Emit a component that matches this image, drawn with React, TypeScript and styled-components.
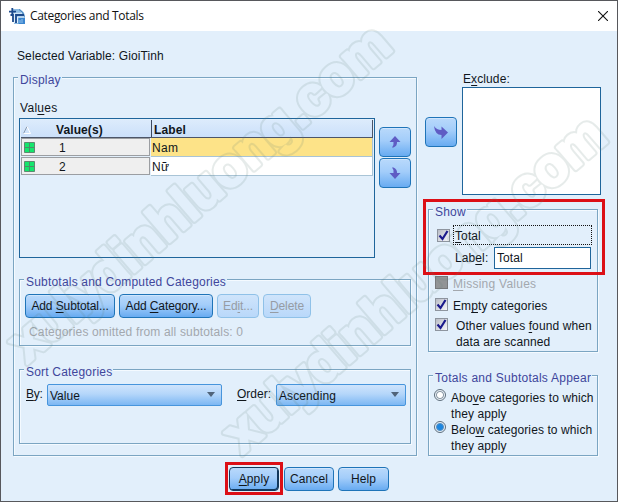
import React from "react";
import styled, { createGlobalStyle, css } from "styled-components";

const GlobalStyle = createGlobalStyle`
  * {
    box-sizing: border-box;
  }

  body {
    margin: 0;
    overflow: hidden;
    font-family: "Liberation Sans", Arial, sans-serif;
    font-size: 12px;
    line-height: 14px;
    color: #10161c;
  }
`;

const Window = styled.div`
  position: relative;
  display: flex;
  flex-direction: column;
  width: 618px;
  height: 502px;
  border: 1px solid #57585c;
  background-color: #e2effb;
`;

const TitleBar = styled.header`
  display: flex;
  align-items: center;
  height: 30px;
  padding: 0 9px 0 8px;
  background-color: #fff;
`;

const Title = styled.h1`
  flex: 1;
  margin: 0 0 0 5px;
  font-family: "Open Sans", "Noto Sans", sans-serif;
  font-size: 12px;
  font-weight: 400;
  letter-spacing: -0.33px;
  color: #111;
`;

const Text = styled.span<{ $spacing?: number; $muted?: boolean }>`
  white-space: nowrap;
  letter-spacing: ${({ $spacing = 0.1 }) => $spacing}px;
  ${({ $muted }) => $muted && "color: #a3a8ae;"}
`;

const Key = styled.span`
  text-decoration: underline;
  text-underline-offset: 2px;
  text-decoration-thickness: 1px;
  text-decoration-skip-ink: none;
`;

const Selected = styled.div`
  display: flex;
  height: 46px;
  padding: 18px 0 0 16px;
`;

const Columns = styled.main`
  display: flex;
  height: 379px;
  padding-left: 12px;
`;

const Group = styled.section<{ $height: number }>`
  display: flex;
  flex-direction: column;
  flex-shrink: 0;
  height: ${({ $height }) => $height}px;
  border: 1px solid #7ba5c2;
  box-shadow: 1px 1px 0 #f4faff, inset 1px 1px 0 #f4faff;
`;

const Legend = styled.h2<{ $spacing?: number }>`
  align-self: flex-start;
  height: 14px;
  margin: -5px 0 0 4px;
  padding: 0 1px 0 2px;
  background-color: #e2effb;
  color: #40469c;
  font-size: 12px;
  font-weight: 400;
  white-space: nowrap;
  letter-spacing: ${({ $spacing = 0.2 }) => $spacing}px;
`;

const DisplayGroup = styled(Group)`
  width: 404px;

  > ${Text} {
    margin: 14px 0 3px 6px;
  }
`;

const ValuesRow = styled.div`
  display: flex;
  gap: 4px;
  padding-left: 5px;
`;

const Table = styled.div`
  width: 356px;
  height: 140px;
  padding: 1px;
  border: 1px solid #1f659b;
`;

const HeaderRow = styled.div`
  display: grid;
  grid-template-columns: 130px 1fr;
  width: 352px;
  height: 18px;
  border-right: 1px solid #4c5568;
  border-bottom: 1px solid #4c5568;
  background: linear-gradient(#dcebfc, #cbe0fa);
  font-weight: 700;
`;

const HeaderCell = styled.div<{ $indent: number }>`
  display: flex;
  align-items: center;
  gap: 25px;
  padding: 2px 0 0 ${({ $indent }) => $indent}px;
  letter-spacing: 0.1px;

  & + & {
    border-left: 1px solid #3c4960;
  }
`;

const Row = styled.div`
  display: grid;
  grid-template-columns: 130px 1fr;
  width: 352px;
  height: 19px;
`;

const ValueCell = styled.div`
  display: flex;
  align-items: center;
  gap: 24px;
  height: 18px;
  margin: 0 1px 1px 0;
  padding: 1px 0 0 2px;
  border: 1px solid #9b9ea2;
  background-color: #efefef;
`;

const LabelCell = styled.div<{ $active?: boolean }>`
  padding: 3px 0 0 1px;
  border: 1px solid #a9c4d6;
  border-width: 0 1px 1px 0;
  background-color: ${({ $active }) => ($active ? "#fde388" : "#fff")};
  letter-spacing: 0.3px;
`;

const Stack = styled.div`
  display: flex;
  flex-direction: column;
  gap: 1px;
  padding-top: 9px;
`;

const buttonFace = css`
  border: 1px solid #1f74b8;
  border-radius: 4px;
  background: linear-gradient(#b9d9fb, #a3cdfa 45%, #68abf1);
  box-shadow: inset 0 1px 0 #cfe5fd;
`;

const IconButton = styled.button`
  display: flex;
  align-items: center;
  justify-content: center;
  flex-shrink: 0;
  width: 32px;
  height: 30px;
  padding: 0;
  ${buttonFace}
`;

const Button = styled.button<{ $width: number; $default?: boolean }>`
  width: ${({ $width }) => $width}px;
  height: 24px;
  padding: 0;
  font: inherit;
  color: #10161c;
  letter-spacing: -0.1px;
  white-space: nowrap;
  ${buttonFace}
  ${({ $default }) =>
    $default && "border-color: #12385c; box-shadow: inset -1px -1px 0 #12385c;"}

  &:disabled {
    color: #969ca4;
    border-color: #8fc1e8;
    background: linear-gradient(#cfe4fb, #b9d8fa);
    box-shadow: none;
  }
`;

const SubtotalsGroup = styled(Group)`
  width: 392px;
  margin: 21px 0 0 5px;

  > ${Text} {
    margin: 7px 0 0 9px;
  }
`;

const SubtotalButtons = styled.div`
  display: flex;
  gap: 4px;
  padding: 5px 0 0 5px;
`;

const SortGroup = styled(Group)`
  width: 392px;
  margin: 23px 0 0 5px;
`;

const SortRow = styled.div`
  display: flex;
  align-items: flex-start;
  padding: 5px 0 0 6px;

  > ${Text} {
    padding-top: 3px;
  }
`;

const SortLabel = styled(Text)<{ $width: number }>`
  flex-shrink: 0;
  width: ${({ $width }) => $width}px;
`;

const Select = styled.div<{ $width: number }>`
  display: flex;
  align-items: center;
  justify-content: space-between;
  flex-shrink: 0;
  width: ${({ $width }) => $width}px;
  height: 22px;
  padding: 1px 6px 0 2px;
  border: 1px solid #4795dc;
  border-radius: 2px;
  background: linear-gradient(#cfe4fc, #b4d6fa 45%, #7cb7f3);

  & + ${Text} {
    margin-left: 15px;
  }
`;

const Caret = styled.span`
  border: 4px solid transparent;
  border-top: 5px solid #50647a;
  border-bottom: 0;
  margin-top: -3px;
`;

const Side = styled.div`
  display: flex;
  flex-direction: column;
  padding-left: 8px;
`;

const ExcludeRow = styled.div`
  display: flex;
  gap: 5px;
  height: 132px;

  > ${IconButton} {
    margin-top: 40px;
  }
`;

const ExcludeColumn = styled.div`
  display: flex;
  flex-direction: column;
  width: 139px;
  margin-top: -5px;

  > ${Text} {
    padding-left: 1px;
  }
`;

const ExcludeList = styled.div`
  height: 108px;
  margin-top: 1px;
  border: 1px solid #1f659b;
  background-color: #fff;
`;

const ShowGroup = styled(Group)`
  position: relative;
  width: 170px;
  margin-left: 3px;
`;

const Highlight = styled.div`
  position: absolute;
  border: 3px solid #dc0f16;
  pointer-events: none;
`;

const ShowHighlight = styled(Highlight)`
  inset: -11px -8px auto -6px;
  height: 76px;
`;

const CheckRow = styled.div<{ $top: number; $left?: number; $gap?: number }>`
  display: flex;
  gap: ${({ $gap = 5 }) => $gap}px;
  margin-top: ${({ $top }) => $top}px;
  padding-left: ${({ $left = 6 }) => $left}px;
  line-height: 16px;
`;

const Box = styled.span<{ $disabled?: boolean }>`
  display: flex;
  flex-shrink: 0;
  width: 13px;
  height: 13px;
  border: 1px solid ${({ $disabled }) => ($disabled ? "#77797c" : "#8e959f")};
  background: ${({ $disabled }) =>
    $disabled ? "#929496" : "linear-gradient(135deg, #b8bcc6, #f6f6fa)"};
`;

const Focus = styled.div`
  width: 139px;
  height: 20px;
  margin: -4px 0 0 -2px;
  padding: 2px 0 0 1px;
  border: 1px dotted #111;
`;

const LabelRow = styled.div`
  display: flex;
  align-items: center;
  justify-content: space-between;
  margin-top: 2px;
  padding: 0 6px 0 26px;
`;

const Input = styled.input`
  width: 97px;
  height: 22px;
  padding: 0 2px;
  border: 1px solid #1f659b;
  font: inherit;
  color: #10161c;
  letter-spacing: 0.1px;
`;

const TotalsGroup = styled(Group)`
  width: 170px;
  margin: 23px 0 0 3px;
`;

const RadioRow = styled.div`
  display: flex;
  gap: 5px;
  padding-left: 5px;
  line-height: 16px;
`;

const RadioList = styled.div`
  margin-top: 5px;
`;

const Radio = styled.span<{ $checked?: boolean }>`
  flex-shrink: 0;
  width: 12px;
  height: 12px;
  margin-top: -1px;
  border: 1px solid #5e6e7c;
  border-radius: 50%;
  background: ${({ $checked }) =>
    $checked
      ? "radial-gradient(#1c86e0 0 2.5px, #5b93c4 3.5px, #e6f1fb 4.5px)"
      : "radial-gradient(#fff 0 2.5px, #8b99a6 3.5px, #eef4fa 4.5px)"};
`;

const Footer = styled.footer`
  display: flex;
  gap: 4px;
  padding: 11px 0 0 228px;

  ${Button} {
    letter-spacing: 0.1px;
  }
`;

const ApplyWrap = styled.div`
  position: relative;
  margin-right: 1px;

  > ${Highlight} {
    inset: -5px -4px -4px -4px;
  }
`;

const Overlay = styled.svg`
  position: absolute;
  inset: -1px;
  pointer-events: none;
`;

const AppIcon = () => (
  <svg width="16" height="16" viewBox="0 0 16 16">
    <path d="M4 1h7q5 3 5 8v7H5z" fill="#8dbbe2" />
    <path d="M10 1.500q4.500 2 5.300 7" stroke="#3f7fb8" fill="none" />
    <path d="M0 3.700h7M3.300 0v8M1.500 7h2.500v7M7 15V7h8" stroke="#1c4a8c" strokeWidth="1.800" fill="none" />
    <path d="M5.500 5v10M6 5.300h7M8.500 15V9H15" stroke="#e9f4fd" strokeWidth="0.900" fill="none" />
    <path d="M9.500 10H16v6H9.500z" fill="#3c86cf" />
    <path d="M11 15v-3M13 15v-4" stroke="#a8d2f4" strokeWidth="0.800" />
  </svg>
);

const CloseIcon = () => (
  <svg width="10" height="10" viewBox="0 0 10 10">
    <path d="M0 0l10 10M10 0L0 10" stroke="#111" strokeWidth="1.100" />
  </svg>
);

const ArrowUp = () => (
  <svg width="12" height="12" viewBox="0 0 12 12">
    <path d="M6 0l5.500 6H8Q8.300 10 4.500 11.500H3Q5 9.500 4.500 6H.5z" fill="#5f5cc4" />
  </svg>
);

const ArrowDown = () => (
  <svg width="12" height="12" viewBox="0 0 12 12">
    <path d="M6 12l5.500-6H8Q8.300 2 4.500.5H3Q5 2.500 4.500 6H.5z" fill="#5f5cc4" />
  </svg>
);

const ArrowRight = () => (
  <svg width="16" height="14" viewBox="0 0 16 14">
    <path d="M15 7.500L8.500 14v-4Q2 10 1 1q2.500 4 7.500 4V1.500z" fill="#5f5cc4" />
  </svg>
);

const Check = () => (
  <svg width="11" height="11" viewBox="0 0 11 11">
    <path d="M1.500 5.500l3 3.500L9.500 1" stroke="#1b1a8c" strokeWidth="2.200" fill="none" />
  </svg>
);

const GridIcon = () => (
  <svg width="11" height="11" viewBox="0 0 11 11">
    <path d="M.5.5h10v10H.5z" fill="#14e66c" stroke="#5c8a70" />
    <path d="M5.500 1v9M1 5.500h9" stroke="#4a8f68" />
  </svg>
);

const SortIcon = () => (
  <svg width="8" height="8" viewBox="0 0 8 8">
    <path d="M.5 7.500L4 .5" stroke="#8c9cb0" fill="none" />
    <path d="M4 .5l3.500 7H.5" stroke="#fff" fill="none" />
  </svg>
);

const marks = [
  "translate(27 364) rotate(-40.6)",
  "translate(242 455) rotate(-40.6)",
];

// Each mark is a thin ring around the thickened letters
const Watermark = () => (
  <Overlay width="618" height="502" viewBox="0 0 618 502">
    <mask id="ring" maskUnits="userSpaceOnUse" x="0" y="0" width="618" height="502">
      {[
        { color: "#fff", width: 6.5 },
        { color: "#000", width: 2.5 },
      ].map(({ color, width }) =>
        marks.map((transform) => (
          <text
            key={transform + width}
            transform={transform}
            textLength="484"
            fontSize="54"
            fontWeight="700"
            fill={color}
            stroke={color}
            strokeWidth={width}
            strokeLinejoin="round"
          >
            xulydinhluong.com
          </text>
        ))
      )}
    </mask>
    <rect width="618" height="502" fill="#5f8078" opacity="0.15" mask="url(#ring)" />
  </Overlay>
);

const rows = [
  { value: 1, label: "Nam" },
  { value: 2, label: "Nữ" },
];

const App: React.FunctionComponent = () => {
  return (
    <Window>
      <GlobalStyle />
      <TitleBar>
        <AppIcon />
        <Title>Categories and Totals</Title>
        <CloseIcon />
      </TitleBar>
      <Selected>
        <Text>Selected Variable: GioiTinh</Text>
      </Selected>
      <Columns>
        <DisplayGroup $height={379}>
          <Legend>Display</Legend>
          <Text $spacing={0.3}>
            Val<Key>u</Key>es
          </Text>
          <ValuesRow>
            <Table>
              <HeaderRow>
                <HeaderCell $indent={2}>
                  <SortIcon />
                  Value(s)
                </HeaderCell>
                <HeaderCell $indent={2}>Label</HeaderCell>
              </HeaderRow>
              {rows.map(({ value, label }, i) => (
                <Row key={value}>
                  <ValueCell>
                    <GridIcon />
                    {value}
                  </ValueCell>
                  <LabelCell $active={i === 0}>{label}</LabelCell>
                </Row>
              ))}
            </Table>
            <Stack>
              <IconButton>
                <ArrowUp />
              </IconButton>
              <IconButton>
                <ArrowDown />
              </IconButton>
            </Stack>
          </ValuesRow>
          <SubtotalsGroup $height={67}>
            <Legend>Subtotals and Computed Categories</Legend>
            <SubtotalButtons>
              <Button $width={90}>
                Add <Key>S</Key>ubtotal...
              </Button>
              <Button $width={94}>
                Add <Key>C</Key>ategory...
              </Button>
              <Button $width={42} disabled>
                Ed<Key>i</Key>t...
              </Button>
              <Button $width={48} disabled>
                <Key>D</Key>elete
              </Button>
            </SubtotalButtons>
            <Text $muted $spacing={0.15}>
              Categories omitted from all subtotals: 0
            </Text>
          </SubtotalsGroup>
          <SortGroup $height={75}>
            <Legend>Sort Categories</Legend>
            <SortRow>
              <SortLabel $width={21} $spacing={-0.2}>
                <Key>B</Key>y:
              </SortLabel>
              <Select $width={175}>
                Value
                <Caret />
              </Select>
              <SortLabel $width={39} $spacing={0}>
                <Key>O</Key>rder:
              </SortLabel>
              <Select $width={130}>
                <Text>Ascending</Text>
                <Caret />
              </Select>
            </SortRow>
          </SortGroup>
        </DisplayGroup>
        <Side>
          <ExcludeRow>
            <IconButton>
              <ArrowRight />
            </IconButton>
            <ExcludeColumn>
              <Text>
                E<Key>x</Key>clude:
              </Text>
              <ExcludeList />
            </ExcludeColumn>
          </ExcludeRow>
          <ShowGroup $height={143}>
            <Legend>Show</Legend>
            <CheckRow $top={10} $left={8}>
              <Box>
                <Check />
              </Box>
              <Focus>
                <Text>
                  <Key>T</Key>otal
                </Text>
              </Focus>
            </CheckRow>
            <LabelRow>
              <Text>
                Lab<Key>e</Key>l:
              </Text>
              <Input defaultValue="Total" />
            </LabelRow>
            <CheckRow $top={7}>
              <Box $disabled />
              <Text $muted $spacing={0.25}>
                <Key>M</Key>issing Values
              </Text>
            </CheckRow>
            <CheckRow $top={6}>
              <Box>
                <Check />
              </Box>
              <Text>
                Em<Key>p</Key>ty categories
              </Text>
            </CheckRow>
            <CheckRow $top={4} $gap={8}>
              <Box>
                <Check />
              </Box>
              <Text>
                Other values <Key>f</Key>ound when
                <br />
                data are scanned
              </Text>
            </CheckRow>
            <ShowHighlight />
          </ShowGroup>
          <TotalsGroup $height={81}>
            <Legend $spacing={0.25}>Totals and Subtotals Appear</Legend>
            <RadioList>
              <RadioRow>
                <Radio />
                <Text>
                  Abo<Key>v</Key>e categories to which
                  <br />
                  they apply
                </Text>
              </RadioRow>
              <RadioRow>
                <Radio $checked />
                <Text>
                  Belo<Key>w</Key> categories to which
                  <br />
                  they apply
                </Text>
              </RadioRow>
            </RadioList>
          </TotalsGroup>
        </Side>
      </Columns>
      <Footer>
        <ApplyWrap>
          <Button $width={50} $default>
            <Key>A</Key>pply
          </Button>
          <Highlight />
        </ApplyWrap>
        <Button $width={50}>Cancel</Button>
        <Button $width={51}>Help</Button>
      </Footer>
      <Watermark />
    </Window>
  );
};

export default App;
